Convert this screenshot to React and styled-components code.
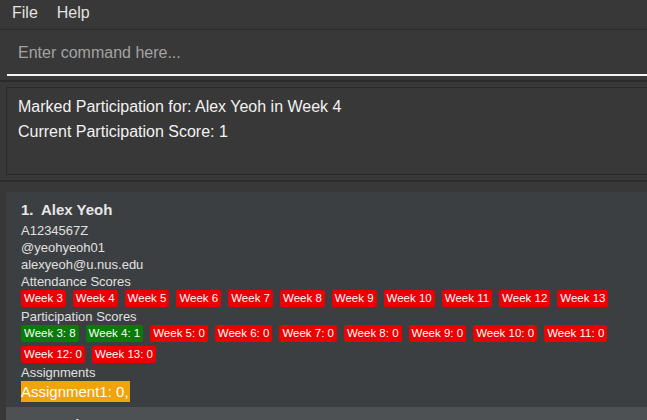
import React from "react";
import styled, { createGlobalStyle } from "styled-components";

const GlobalStyle = createGlobalStyle`
  html, body {
    margin: 0;
    padding: 0;
    background: #383838;
    overflow: hidden;
  }
  body {
    font-family: "Liberation Sans", Arial, sans-serif;
  }
`;

const Window = styled.div`
  width: 647px;
  height: 420px;
  display: flex;
  flex-direction: column;
  background: #383838;
  overflow: hidden;
`;

const MenuBar = styled.div`
  height: 29px;
  display: flex;
  align-items: center;
  gap: 19px;
  padding-left: 12px;
  border-bottom: 1px solid #2c2c2c;
  flex-shrink: 0;
`;

const MenuItem = styled.span`
  color: #e2e2e2;
  font-size: 16px;
  line-height: 20px;
  margin-top: -4px;
`;

const CommandSection = styled.div`
  padding: 0 0 0 7px;
  height: 50px;
  border-bottom: 2px solid #2b2b2b;
  flex-shrink: 0;
`;

const CommandInput = styled.div`
  height: 43px;
  display: flex;
  align-items: center;
  padding-left: 11px;
  padding-top: 1px;
  border-bottom: 2px solid #f4f4f4;
  color: #a3a3a3;
  font-size: 16px;
`;

const ResultSection = styled.div`
  padding: 5px 0 5px 6px;
  border-bottom: 2px solid #2b2b2b;
  flex-shrink: 0;
`;

const ResultBox = styled.div`
  height: 80px;
  border: 1px solid #2a2a2a;
  border-right: none;
  padding: 6px 0 0 11px;
  color: #f2f2f2;
  font-size: 16px;
  line-height: 25px;
`;

const ListPanel = styled.div`
  flex: 1;
  margin-top: 10px;
  padding-left: 6px;
  overflow: hidden;
`;

const Card = styled.div`
  background: ${(p) => (p.$alt ? "#4e5153" : "#3c3f41")};
  padding: 8px 15px 5px 15px;
  display: flex;
  flex-direction: column;
`;

const NameRow = styled.div`
  display: flex;
  color: #e6e6e6;
  font-size: 15px;
  font-weight: bold;
  line-height: 20px;
  margin-bottom: 2px;
`;

const Index = styled.span`
  width: 20px;
`;

const Line = styled.div`
  color: #e0e0e0;
  font-size: 13px;
  line-height: 17px;
`;

const TagRow = styled.div`
  display: flex;
  flex-wrap: wrap;
  column-gap: 7px;
  row-gap: 4px;
  margin-bottom: 1px;
`;

const Tag = styled.span`
  background: ${(p) => (p.$green ? "#087b08" : "#ec0000")};
  color: #fff;
  font-size: 11.5px;
  line-height: 17px;
  height: 17px;
  padding: 0 3px;
  border-radius: 2px;
  white-space: nowrap;
`;

const AssignmentTag = styled.span`
  align-self: flex-start;
  background: #f0a30a;
  color: #fbfbfb;
  font-size: 15px;
  line-height: 21px;
  padding: 0 1px 0 0;
`;

const attendance = [3, 4, 5, 6, 7, 8, 9, 10, 11, 12, 13];
const participation = [
  [3, 8], [4, 1], [5, 0], [6, 0], [7, 0], [8, 0], [9, 0], [10, 0], [11, 0], [12, 0], [13, 0],
];

export default function App() {
  return (
    <Window>
      <GlobalStyle />
      <MenuBar>
        <MenuItem>File</MenuItem>
        <MenuItem>Help</MenuItem>
      </MenuBar>
      <CommandSection>
        <CommandInput>Enter command here...</CommandInput>
      </CommandSection>
      <ResultSection>
        <ResultBox>
          <div>Marked Participation for: Alex Yeoh in Week 4</div>
          <div>Current Participation Score: 1</div>
        </ResultBox>
      </ResultSection>
      <ListPanel>
        <Card>
          <NameRow>
            <Index>1.</Index>
            <span>Alex Yeoh</span>
          </NameRow>
          <Line>A1234567Z</Line>
          <Line>@yeohyeoh01</Line>
          <Line>alexyeoh@u.nus.edu</Line>
          <Line>Attendance Scores</Line>
          <TagRow>
            {attendance.map((w) => (
              <Tag key={w}>Week {w}</Tag>
            ))}
          </TagRow>
          <Line>Participation Scores</Line>
          <TagRow>
            {participation.map(([w, s]) => (
              <Tag key={w} $green={s > 0}>
                Week {w}: {s}
              </Tag>
            ))}
          </TagRow>
          <Line>Assignments</Line>
          <AssignmentTag>Assignment1: 0,</AssignmentTag>
        </Card>
        <Card $alt>
          <NameRow>
            <Index>2.</Index>
            <span>Bernice Yu</span>
          </NameRow>
        </Card>
      </ListPanel>
    </Window>
  );
}
